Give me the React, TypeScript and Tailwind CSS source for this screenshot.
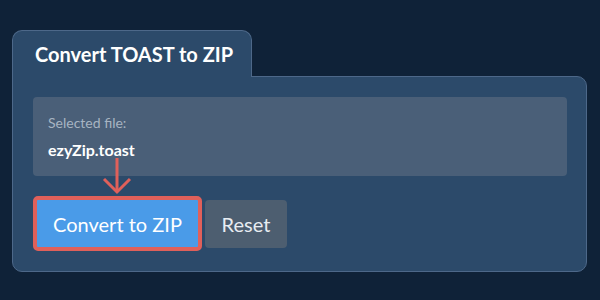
export default function App() {
  return (
    <div
      className="h-[300px] w-[600px] bg-[#0f2238] pl-[12px] pt-[30px]"
      style={{ fontFamily: 'Lato, "Noto Sans", sans-serif' }}
    >
      <div className="relative z-10 -mb-px flex h-[47px] w-[240px] items-center rounded-t-[10px] border border-b-0 border-[#4d6889] bg-[#2c4a6a] pl-[22px]">
        <h1 className="text-[20px] font-bold text-white">Convert TOAST to ZIP</h1>
      </div>
      <div className="relative w-[575px] rounded-b-[10px] rounded-tr-[10px] border border-[#4d6889] bg-[#2c4a6a] px-[20px] pb-[20px] pt-[20px]">
        <div className="flex h-[79px] w-[534px] flex-col justify-center rounded-[4px] bg-[#4a5f78] px-[15px]">
          <span className="text-[14px] leading-[20px] text-[#a7b4c2]">Selected file:</span>
          <span className="mt-[7px] text-[16px] font-bold leading-[20px] text-white">ezyZip.toast</span>
        </div>
        <svg
          className="absolute left-[89px] top-[81px]"
          width="30"
          height="37"
          viewBox="0 0 30 37"
          fill="none"
          stroke="#e0605a"
          strokeWidth="3"
        >
          <path d="M15 0 V34" />
          <path d="M2 21 L15 34 L28 21" />
        </svg>
        <div className="mt-[20px] flex items-center gap-[3px]">
          <button className="h-[55px] w-[169px] rounded-[5px] border-4 border-[#e0605a] bg-[#4a9be8] text-[20px] text-white">
            Convert to ZIP
          </button>
          <button className="h-[48px] w-[82px] rounded-[4px] bg-[#4d5e70] text-[20px] text-[#e8edf2]">
            Reset
          </button>
        </div>
      </div>
    </div>
  );
}
